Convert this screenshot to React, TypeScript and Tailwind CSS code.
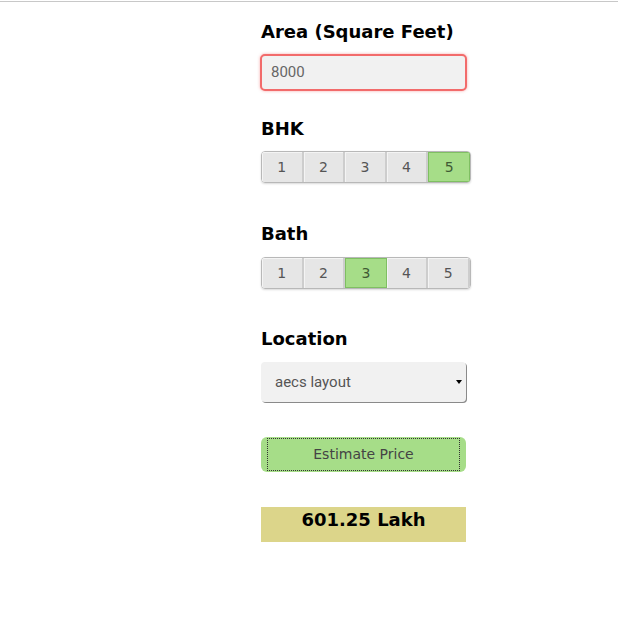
const bhk = [1, 2, 3, 4, 5];

function Segmented({ active }: { active: number }) {
  return (
    <div className="flex w-[210px] h-[32px] rounded-[4px] overflow-hidden border border-[#b8b8b8] shadow-[0_1px_2px_rgba(0,0,0,0.15)]">
      {bhk.map((n) => (
        <div
          key={n}
          className={
            n === active
              ? "flex-1 flex items-center justify-center bg-[#a6dd88] border border-[#7fbf62] text-[#3f5a34] text-[14px]"
              : "flex-1 flex items-center justify-center bg-[#e6e6e6] border-r-2 border-[#cdcdcd] shadow-[inset_1px_1px_0_#f4f4f4] text-[#555] text-[14px]"
          }
        >
          {n}
        </div>
      ))}
    </div>
  );
}

export default function App() {
  return (
    <div className="min-h-[618px] bg-white" style={{ fontFamily: "'DejaVu Sans', sans-serif" }}>
      <div className="h-[1px]" />
      <div className="h-[1px] bg-[#c8c8c8]" />

      <div className="pl-[261px] pt-[19px] flex flex-col">
        {/* Area */}
        <h2 className="text-[18px] font-bold text-black leading-[22px]">Area (Square Feet)</h2>
        <div className="mt-[11px] -ml-[1px] w-[207px] h-[37px] rounded-[5px] border-2 border-[#f26b6b] bg-[#f1f1f1] flex items-center pl-[9px] shadow-[0_0_3px_rgba(240,80,80,0.5)]">
          <span className="text-[15px] text-[#666]" style={{ fontFamily: "Roboto, sans-serif" }}>8000</span>
        </div>

        {/* BHK */}
        <h2 className="mt-[27px] text-[18px] font-bold text-black leading-[22px]">BHK</h2>
        <div className="mt-[11px]">
          <Segmented active={5} />
        </div>

        {/* Bath */}
        <h2 className="mt-[40px] text-[18px] font-bold text-black leading-[22px]">Bath</h2>
        <div className="mt-[12px]">
          <Segmented active={3} />
        </div>

        {/* Location */}
        <h2 className="mt-[39px] text-[18px] font-bold text-black leading-[22px]">Location</h2>
        <div className="mt-[12px] relative w-[205px] h-[40px] rounded-[4px] bg-[#f1f1f1] shadow-[1px_1px_0_#8a8a8a] flex items-center pl-[14px]">
          <span className="text-[15px] text-[#555]" style={{ fontFamily: "Roboto, sans-serif" }}>aecs layout</span>
          <span className="absolute right-[4px] top-[18px] w-0 h-0 border-l-[3px] border-r-[3px] border-t-[4px] border-l-transparent border-r-transparent border-t-black" />
        </div>

        {/* Estimate button */}
        <div className="mt-[35px] w-[205px] h-[35px] rounded-[6px] bg-[#a6dd88] p-[1px_6px]">
          <div className="h-full border border-dotted border-[#333] flex items-center justify-center text-[14px] text-[#444]">
            Estimate Price
          </div>
        </div>

        {/* Result */}
        <div className="mt-[35px] w-[205px] h-[35px] bg-[#dcd58a] flex justify-center pt-[2px]">
          <span className="text-[18px] font-bold text-black leading-[22px]">601.25 Lakh</span>
        </div>
      </div>
    </div>
  );
}
